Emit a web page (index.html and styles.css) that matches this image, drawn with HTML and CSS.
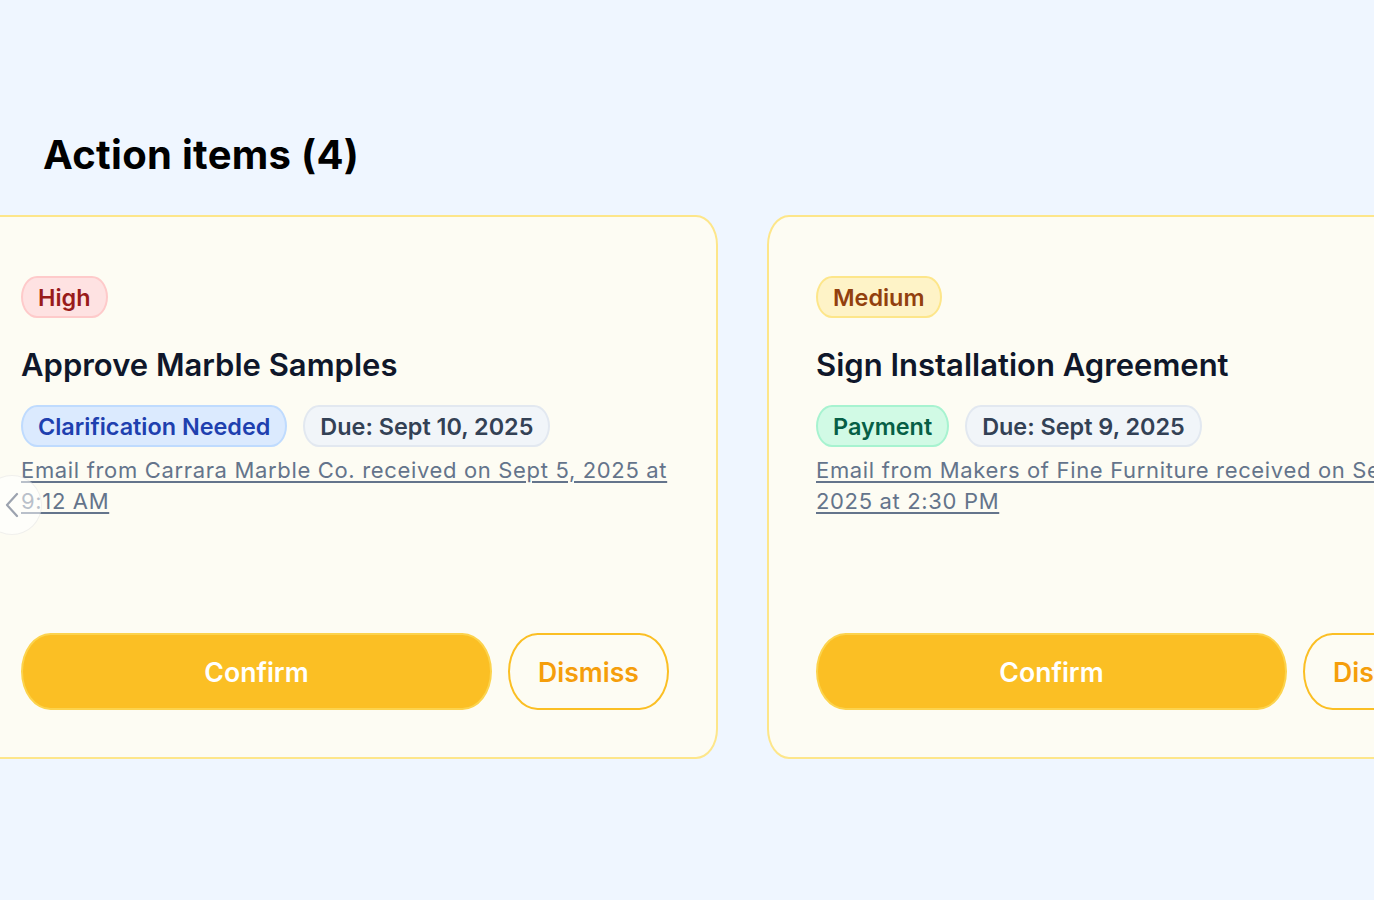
FILE: index.html
```html
<!DOCTYPE html>
<html lang="en">
<head>
<meta charset="utf-8">
<title>Action items</title>
<link rel="stylesheet" href="styles.css">
</head>
<body>
<main class="page">
  <h2 class="heading">Action items (4)</h2>
  <div class="carousel">
    <div class="track">
      <article class="card">
        <span class="chip chip-high">High</span>
        <h3 class="card-title">Approve Marble Samples</h3>
        <div class="tags">
          <span class="chip chip-blue">Clarification Needed</span>
          <span class="chip chip-due">Due: Sept 10, 2025</span>
        </div>
        <a class="source" href="#">Email from Carrara Marble Co. received on Sept 5, 2025 at 9:12 AM</a>
        <div class="actions">
          <button class="btn btn-confirm">Confirm</button>
          <button class="btn btn-dismiss">Dismiss</button>
        </div>
      </article>
      <article class="card">
        <span class="chip chip-medium">Medium</span>
        <h3 class="card-title">Sign Installation Agreement</h3>
        <div class="tags">
          <span class="chip chip-green">Payment</span>
          <span class="chip chip-due">Due: Sept 9, 2025</span>
        </div>
        <a class="source" href="#">Email from Makers of Fine Furniture received on Sept 4, 2025 at 2:30 PM</a>
        <div class="actions">
          <button class="btn btn-confirm">Confirm</button>
          <button class="btn btn-dismiss">Dismiss</button>
        </div>
      </article>
      <article class="card">
        <span class="chip chip-high">High</span>
        <h3 class="card-title">Review Lighting Plan</h3>
        <div class="tags">
          <span class="chip chip-blue">Review</span>
          <span class="chip chip-due">Due: Sept 12, 2025</span>
        </div>
        <a class="source" href="#">Email from Studio Lumen received on Sept 6, 2025 at 10:05 AM</a>
        <div class="actions">
          <button class="btn btn-confirm">Confirm</button>
          <button class="btn btn-dismiss">Dismiss</button>
        </div>
      </article>
    </div>
    <button class="nav nav-prev" aria-label="Previous">
      <svg width="14" height="26" viewBox="0 0 14 26" fill="none"><path d="M12 2 L2 13 L12 24" stroke="#9ca3af" stroke-width="2.2" stroke-linecap="round" stroke-linejoin="round"/></svg>
    </button>
  </div>
</main>
</body>
</html>
```

FILE: styles.css
```css
* { box-sizing: border-box; }
html, body { margin: 0; padding: 0; }
body {
  background: #eff6ff;
  font-family: Inter, "Noto Sans", "Liberation Sans", sans-serif;
  overflow: hidden;
}
.page {
  padding-top: 131px;
  height: 900px;
}
.heading {
  margin: 0 0 36px 43px;
  font-size: 40px;
  line-height: 48px;
  font-weight: 700;
  color: #000;
  letter-spacing: 0.3px;
}
.carousel {
  position: relative;
  overflow: hidden;
}
.track {
  display: flex;
  gap: 49px;
  margin-left: -28px;
}
.card {
  flex: 0 0 746px;
  height: 544px;
  background: #fdfcf3;
  border: 2px solid #fde68a;
  border-radius: 22px / 30px;
  padding: 59px 47px 47px 47px;
  display: flex;
  flex-direction: column;
  align-items: flex-start;
}
.chip {
  display: inline-flex;
  align-items: center;
  height: 42px;
  padding: 0 15px;
  border-radius: 16px / 21px;
  border: 2px solid transparent;
  font-size: 23.4px;
  font-weight: 600;
  white-space: nowrap;
}
.chip-high { background: #fee2e2; border-color: #fecaca; color: #991b1b; }
.chip-medium { background: #fef3c7; border-color: #fde68a; color: #92400e; }
.chip-blue { background: #dbeafe; border-color: #bfdbfe; color: #1e40af; }
.chip-green { background: #d1fae5; border-color: #a7f3d0; color: #065f46; }
.chip-due { background: #f1f5f9; border-color: #e2e8f0; color: #334155; }
.card-title {
  margin: 27px 0 0 0;
  font-size: 31px;
  line-height: 39px;
  font-weight: 600;
  color: #0f172a;
}
.tags {
  display: flex;
  gap: 16px;
  margin-top: 21px;
}
.source {
  margin-top: 8px;
  font-size: 22px;
  line-height: 31px;
  letter-spacing: 0.66px;
  color: #64748b;
  text-decoration: underline;
  text-underline-offset: 3px;
  text-decoration-thickness: 1.5px;
}
.actions {
  margin-top: auto;
  display: flex;
  gap: 16px;
  width: 100%;
}
.btn {
  height: 77px;
  border-radius: 30px / 39px;
  font-family: inherit;
  font-size: 26.6px;
  font-weight: 600;
  cursor: pointer;
}
.btn-confirm {
  flex: 1;
  background: #fbbf24;
  border: 2px solid #fcd34d;
  color: #fff;
}
.btn-dismiss {
  flex: 0 0 161px;
  background: transparent;
  border: 2px solid #fbbf24;
  color: #f59e0b;
}
.nav {
  position: absolute;
  left: -18px;
  top: 260px;
  width: 60px;
  height: 60px;
  border-radius: 50%;
  background: rgba(255, 255, 255, 0.55);
  border: 1px solid rgba(15, 23, 42, 0.06);
  display: flex;
  align-items: center;
  justify-content: flex-end;
  padding: 0 22px 0 0;
}
```
